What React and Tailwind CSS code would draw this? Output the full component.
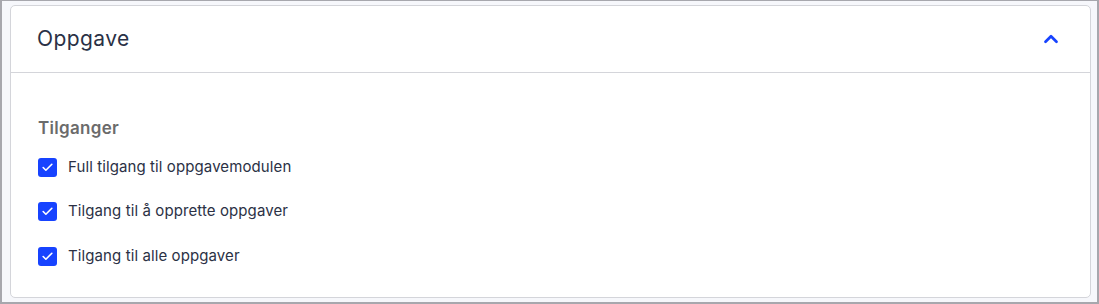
import { ChevronUp, Check } from 'lucide-react';

const permissions = [
  'Full tilgang til oppgavemodulen',
  'Tilgang til å opprette oppgaver',
  'Tilgang til alle oppgaver',
];

function PermissionRow({ label }) {
  return (
    <label className="flex items-center gap-[11px] h-5">
      <span className="flex items-center justify-center w-[19px] h-[19px] rounded-[3px] bg-[#1743ff]">
        <Check className="w-[13px] h-[13px] text-white" strokeWidth={3} />
      </span>
      <span className="text-[15px] tracking-[0.1px] text-[#2b3145]">{label}</span>
    </label>
  );
}

export default function App() {
  return (
    <div
      className="w-[1099px] h-[304px] flex flex-col bg-[#f6f7fb] border-2 border-t border-[#a7a7ad] pl-[8px] pr-[6px] pt-[4px] pb-[4px]"
      style={{ fontFamily: 'Inter, "Noto Sans", sans-serif' }}
    >
      <div className="flex-1 flex flex-col bg-white border border-[#d4d5da] rounded-[5px]">
        <div className="h-[67px] flex items-center justify-between pl-[26px] pr-[28px] border-b border-[#d4d5da]">
          <h2 className="text-[21px] text-[#2a3146] tracking-[0.4px] -mt-[1px]">Oppgave</h2>
          <ChevronUp className="w-[22px] h-[22px] text-[#1743ff] -mt-[1px]" strokeWidth={3} />
        </div>
        <div className="pl-[27px] pt-[43px]">
          <h3 className="text-[17px] leading-6 font-semibold tracking-[0.3px] text-[#6b6b6b]">Tilganger</h3>
          <div className="mt-[17px] flex flex-col gap-[24.5px]">
            {permissions.map((p) => (
              <PermissionRow key={p} label={p} />
            ))}
          </div>
        </div>
      </div>
    </div>
  );
}
